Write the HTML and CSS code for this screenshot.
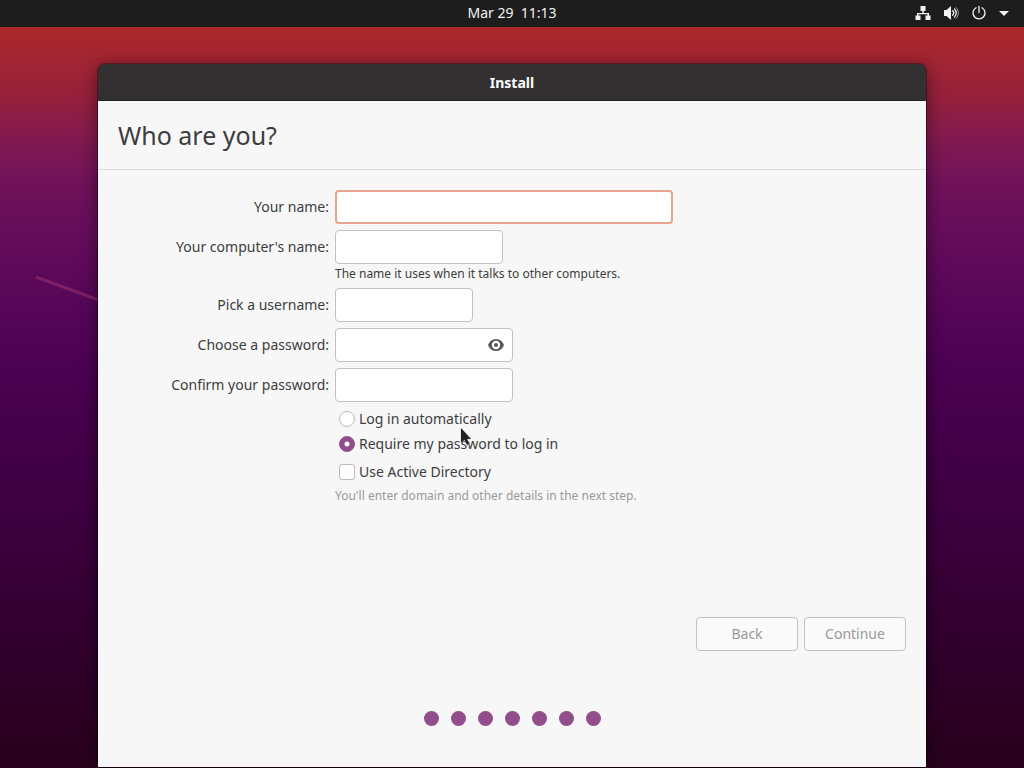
FILE: index.html
```html
<!DOCTYPE html>
<html lang="en">
<head>
<meta charset="utf-8">
<title>Install</title>
<meta name="viewport" content="width=device-width, initial-scale=1">
<link rel="stylesheet" href="styles.css">
</head>
<body>
<header class="topbar">
  <time class="clock">Mar 29&nbsp; 11:13</time>
  <div class="tray">
    <svg width="16" height="16" viewBox="0 0 16 16" fill="currentColor" role="img" aria-label="Network">
      <path d="M5.500 1h5v5H8.700v2H14v2.500h1.500V15h-5v-4.500h2V9.300h-9v1.200h2V15h-5v-4.500H2V8h5.300V6H5.500z"/>
    </svg>
    <svg width="16" height="16" viewBox="0 0 16 16" role="img" aria-label="Volume">
      <path fill="currentColor" d="M1 5h2.500L8 1v14l-4.500-4H1z"/>
      <path fill="none" stroke="currentColor" stroke-width="1.300" stroke-linecap="round" d="M9.700 5.800a3.200 3.200 0 0 1 0 4.400M11.500 4a5.600 5.600 0 0 1 0 8"/>
      <path fill="none" stroke="currentColor" stroke-opacity=".6" stroke-linecap="round" d="M13.300 2.500a8 8 0 0 1 0 11"/>
    </svg>
    <svg width="16" height="16" viewBox="0 0 16 16" role="img" aria-label="Power">
      <path fill="none" stroke="currentColor" stroke-width="1.300" stroke-linecap="round" d="M8 1.500v6M5 2.700a6 6 0 1 0 6 0"/>
    </svg>
    <svg class="caret" width="10" height="16" viewBox="0 0 10 16" fill="currentColor" aria-hidden="true"><path d="M0 6h10L5 11z"/></svg>
  </div>
</header>

<main class="desktop">
  <svg class="streak" width="64" height="30" viewBox="0 0 64 30" aria-hidden="true"><path d="M1 3 64 26" /></svg>
  <section class="window">
    <div class="titlebar">Install</div>
    <h1 class="heading">Who are you?</h1>
    <form class="form">
      <div class="fields">
        <label class="label" for="name">Your name:</label>
        <input class="entry entry-name" id="name" type="text">

        <label class="label" for="host">Your computer's name:</label>
        <div>
          <input class="entry entry-host" id="host" type="text" aria-describedby="host-hint">
          <p class="hint" id="host-hint">The name it uses when it talks to other computers.</p>
        </div>

        <label class="label" for="user">Pick a username:</label>
        <input class="entry entry-user" id="user" type="text">

        <label class="label" for="pass">Choose a password:</label>
        <div class="entry entry-pass reveal-box">
          <input class="bare" id="pass" type="password">
          <button class="reveal" type="button" aria-label="Show password">
            <svg width="16" height="16" viewBox="0 0 16 16" aria-hidden="true">
              <path fill="currentColor" fill-rule="evenodd" d="M0 8c1.500-4 4.500-6 8-6s6.500 2 8 6c-1.500 4-4.500 6-8 6s-6.500-2-8-6zM8 3.800a4.200 4.200 0 1 0 0 8.400 4.200 4.200 0 0 0 0-8.400z"/>
              <circle cx="8" cy="8" r="2" fill="currentColor"/>
            </svg>
          </button>
        </div>

        <label class="label" for="confirm">Confirm your password:</label>
        <input class="entry entry-pass" id="confirm" type="password">

        <div class="options">
          <label class="option"><input class="tick round" type="radio" name="login">Log in automatically</label>
          <label class="option"><input class="tick round" type="radio" name="login" checked>Require my password to log in</label>
          <label class="option directory"><input class="tick" type="checkbox">Use Active Directory</label>
          <p class="hint faded">You'll enter domain and other details in the next step.</p>
        </div>
      </div>
      <div class="actions">
        <button class="button" type="button" disabled>Back</button>
        <button class="button" type="submit" disabled>Continue</button>
      </div>
    </form>
    <div class="steps" role="img" aria-label="Installation progress">
      <span class="dot"></span><span class="dot"></span><span class="dot"></span><span class="dot"></span><span class="dot"></span><span class="dot"></span><span class="dot"></span>
    </div>
  </section>
</main>

<svg class="pointer" width="14" height="22" viewBox="0 0 14 22" aria-hidden="true">
  <path d="M2 1v15l3.500-3.200L8 18l2.500-1.200L8 12h4z"/>
</svg>
</body>
</html>
```
FILE: styles.css
```css
* {
  box-sizing: border-box;
}

body {
  display: flex;
  flex-direction: column;
  min-height: 100vh;
  margin: 0;
  background: #29001f;
  color: #3d3d3d;
  font: 14px/22px "Noto Sans", "Open Sans", sans-serif;
}

.topbar {
  display: grid;
  grid-template-columns: 1fr auto 1fr;
  align-items: center;
  height: 27px;
  padding: 0 15px 2px;
  background: #1d1d1d;
  color: #f2f2f2;
}

.clock {
  grid-column: 2;
}

.tray {
  display: flex;
  justify-content: flex-end;
  align-items: center;
  gap: 12px;
}

.desktop {
  position: relative;
  flex: 1;
  display: flex;
  padding: 37px 98px 1px;
  background: linear-gradient(#ad292b 0, #97213a 9%, #831a50 15%, #701259 21%, #650d5b 28%, #590758 36%, #4d0253 45%, #440049 55%, #3d0040 65%, #32002f 82%, #29001c 100%);
  overflow: hidden;
}

.streak {
  position: absolute;
  left: 35px;
  top: 247px;
  fill: none;
  stroke: #7d2068;
  stroke-width: 3px;
}

.window {
  position: relative;
  flex: 1;
  display: flex;
  flex-direction: column;
  border-radius: 7px 7px 0 0;
  background: #323030;
  box-shadow: 0 0 0 1px rgba(0, 0, 0, 0.3), 0 3px 18px rgba(0, 0, 0, 0.5);
}

.titlebar {
  height: 37px;
  border-bottom: 1px solid #222;
  color: #fff;
  font-weight: 700;
  line-height: 37px;
  text-align: center;
}

.heading {
  margin: 0;
  padding: 16px 20px;
  border-bottom: 1px solid #dcdcdc;
  background: #f7f7f7;
  font-size: 25px;
  font-weight: 400;
  line-height: 36px;
}

.form {
  flex: 1;
  display: flex;
  flex-direction: column;
  justify-content: space-between;
  padding: 20px 20px 0;
  background: #f7f7f7;
}

.fields {
  display: grid;
  grid-template-columns: 211px 1fr;
  gap: 6px;
}

.label {
  line-height: 34px;
  text-align: right;
}

.entry {
  display: block;
  height: 34px;
  padding: 0 8px;
  border: 1px solid #c4c2c0;
  border-radius: 4px;
  background: #fff;
  color: inherit;
  font: inherit;
}

.entry-name {
  width: 338px;
  border: 2px solid #e8a48c;
}

.entry-host {
  width: 168px;
}

.entry-user {
  width: 138px;
}

.entry-pass {
  width: 178px;
}

.reveal-box {
  display: flex;
  align-items: center;
}

.bare {
  flex: 1;
  min-width: 0;
  border: 0;
  background: none;
  font: inherit;
}

.bare:focus {
  outline: 0;
}

.reveal {
  display: flex;
  padding: 0;
  border: 0;
  background: none;
  color: #555;
}

.hint {
  margin: 0;
  padding-top: 2px;
  font-size: 12px;
  line-height: 16px;
}

.faded {
  color: #9a9a9a;
}

.options {
  grid-column: 2;
  display: flex;
  flex-direction: column;
  gap: 3px;
}

.option {
  display: flex;
  align-items: center;
  gap: 4px;
  padding-left: 4px;
}

.directory {
  padding-top: 3px;
}

.tick {
  appearance: none;
  width: 16px;
  height: 16px;
  margin: 0;
  border: 1px solid #bdbbb9;
  border-radius: 3px;
  background: #fff;
}

.round {
  border-radius: 50%;
}

.tick:checked {
  border-color: #924d8b;
  background: radial-gradient(circle, #fff 2px, #924d8b 3px);
}

.actions {
  display: flex;
  justify-content: flex-end;
  gap: 6px;
}

.button {
  width: 102px;
  height: 34px;
  padding: 0;
  border: 1px solid #c4c2c0;
  border-radius: 4px;
  background: #fafafa;
  color: #999;
  font: inherit;
}

.steps {
  display: flex;
  justify-content: center;
  gap: 12px;
  padding: 60px 0 41px;
  background: #f7f7f7;
}

.dot {
  width: 15px;
  height: 15px;
  border-radius: 50%;
  background: #924d8b;
}

.pointer {
  position: absolute;
  left: 459px;
  top: 427px;
  fill: #222;
  stroke: #ddd;
  stroke-width: 1px;
  paint-order: stroke;
  pointer-events: none;
}
```
